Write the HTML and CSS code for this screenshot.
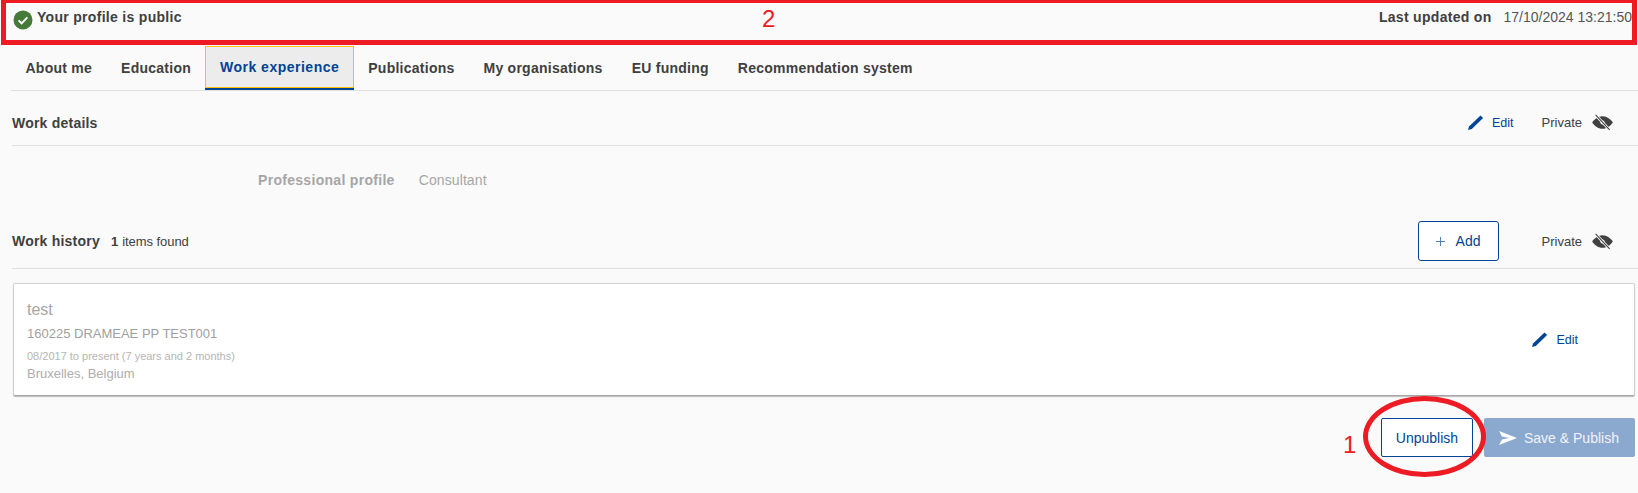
FILE: index.html
```html
<!DOCTYPE html>
<html lang="en">
<head>
    <meta charset="UTF-8">
    <title>Work experience</title>
    <link rel="stylesheet" href="styles.css">
</head>
<body>
    <!-- Status bar -->
    <div class="status-bar">
        <div class="status-left">
            <svg class="status-icon" viewBox="0 0 20 20" width="20" height="20">
                <circle cx="10" cy="10" r="9.5" fill="#467a39"/>
                <path d="M5.6 10.4l3 2.9 5.8-6" fill="none" stroke="#fff" stroke-width="1.9"/>
            </svg>
            <strong>Your profile is public</strong>
        </div>
        <div class="status-right">
            <strong>Last updated on</strong>
            <span>17/10/2024 13:21:50</span>
        </div>
    </div>

    <!-- Tabs -->
    <div class="tabs">
        <div class="tab">About me</div>
        <div class="tab">Education</div>
        <div class="tab tab-active">Work experience</div>
        <div class="tab">Publications</div>
        <div class="tab">My organisations</div>
        <div class="tab">EU funding</div>
        <div class="tab">Recommendation system</div>
    </div>

    <!-- Work details -->
    <div class="section-head details-head">
        <h2>Work details</h2>
        <div class="head-actions">
            <a class="edit-link">
                <svg viewBox="0 0 16 15" width="16" height="15"><path d="M0 15l1-3.500L12.500 .5l2.600 2.600L3.800 14z" fill="#004494"/></svg>
                Edit
            </a>
            <div class="private">
                Private
                <svg viewBox="0 0 20 16" width="21" height="17"><path d="M10 2C5.6 2 2.1 5 .2 8c1.9 3 5.4 6 9.8 6s7.9-3 9.8-6C17.900 5 14.400 2 10 2z" fill="#404040"/><circle cx="10" cy="8" r="2" fill="#fafafa"/><path d="M3.400 .8l13.400 14.200" stroke="#fafafa" stroke-width="2.600"/><path d="M3.400 .8l13.400 14.200" stroke="#404040" stroke-width="1"/></svg>
            </div>
        </div>
    </div>
    <div class="field">
        <strong>Professional profile</strong>
        <span>Consultant</span>
    </div>

    <!-- Work history -->
    <div class="section-head history-head">
        <div class="history-title"><h2>Work history</h2> <b>1</b> items found</div>
        <div class="head-actions">
            <button class="add-button">
                <svg viewBox="0 0 11 11" width="11" height="11"><path d="M5.5 0v11M0 5.5h11" stroke="#4d7cb5" stroke-width="1.2"/></svg>
                Add
            </button>
            <div class="private">
                Private
                <svg viewBox="0 0 20 16" width="21" height="17"><path d="M10 2C5.6 2 2.1 5 .2 8c1.9 3 5.4 6 9.8 6s7.9-3 9.8-6C17.900 5 14.400 2 10 2z" fill="#404040"/><circle cx="10" cy="8" r="2" fill="#fafafa"/><path d="M3.400 .8l13.400 14.200" stroke="#fafafa" stroke-width="2.600"/><path d="M3.400 .8l13.400 14.200" stroke="#404040" stroke-width="1"/></svg>
            </div>
        </div>
    </div>
    <div class="card">
        <div class="card-text">
            <div class="card-title">test</div>
            <div class="card-org">160225 DRAMEAE PP TEST001</div>
            <div class="card-date">08/2017 to present (7 years and 2 months)</div>
            <div class="card-place">Bruxelles, Belgium</div>
        </div>
        <a class="edit-link">
            <svg viewBox="0 0 16 15" width="16" height="15"><path d="M0 15l1-3.500L12.500 .5l2.600 2.600L3.800 14z" fill="#004494"/></svg>
            Edit
        </a>
    </div>

    <!-- Footer buttons -->
    <div class="footer-actions">
        <button class="unpublish-button">Unpublish</button>
        <button class="publish-button">
            <svg viewBox="0 0 18 14" width="18" height="14"><path d="M0 0l18 7-18 7 3-5.500 7-1.500-7-1.500z" fill="#fff"/></svg>
            Save &amp; Publish
        </button>
    </div>

    <!-- Red annotations drawn over the screenshot -->
    <div class="note-box"></div>
    <div class="note-number note-two">2</div>
    <div class="note-number note-one">1</div>
    <div class="note-ring"></div>
</body>
</html>
```

FILE: styles.css
```css
body {
    position: relative;
    margin: 0;
    height: 493px;
    overflow: hidden;
    background-color: #fafafa;
    color: #404040;
    font-family: "Liberation Sans", Arial, sans-serif;
    font-size: 13px;
}

h2 {
    margin: 0;
    font-size: 14px;
    font-weight: bold;
    letter-spacing: 0.22px;
}

.status-bar {
    display: flex;
    justify-content: space-between;
    height: 46px;
    padding: 9px 6px 0 13px;
    box-sizing: border-box;
    font-size: 14px;
}

.status-left {
    display: flex;
    align-items: flex-start;
    gap: 4px;
}

.status-bar strong {
    letter-spacing: 0.3px;
}

.status-icon {
    margin-top: 1px;
}

.status-right {
    display: flex;
    gap: 12px;
}

.status-right span {
    color: #555;
}

.tabs {
    display: flex;
    height: 45px;
    margin-left: 11px;
    border-bottom: 1px solid #e0e0e0;
    box-sizing: border-box;
    font-size: 14px;
    font-weight: bold;
    letter-spacing: 0.25px;
}

.tab {
    display: flex;
    align-items: center;
    height: 44px;
    box-sizing: border-box;
    padding: 0 14.5px;
    color: #404040;
}

.tab-active {
    background-color: #ececec;
    border-bottom: 2px solid #004494;
    box-shadow: inset 0 0 0 1px #ffc107;
    color: #004494;
    letter-spacing: 0.5px;
}

.section-head {
    display: flex;
    justify-content: space-between;
    align-items: center;
    margin-left: 12px;
    border-bottom: 1px solid #e0e0e0;
    box-sizing: border-box;
}

.details-head {
    height: 55px;
    padding: 9px 25px 0 0;
}

.history-head {
    padding: 21px 25px 7px 0;
}

.head-actions {
    display: flex;
    align-items: center;
    gap: 28px;
}

.edit-link {
    display: flex;
    align-items: center;
    gap: 8px;
    color: #004494;
    font-size: 12.5px;
}

.private {
    display: flex;
    align-items: center;
    gap: 10px;
}

.field {
    display: flex;
    gap: 24px;
    height: 40px;
    align-items: center;
    margin-top: 14px;
    padding-left: 258px;
    font-size: 14px;
    color: #a6a6a6;
}

.field strong {
    letter-spacing: 0.3px;
}

.field span {
    letter-spacing: 0.1px;
}

.history-title {
    display: flex;
    align-items: baseline;
    gap: 4px;
    letter-spacing: -0.05px;
}

.history-title b {
    margin-left: 7px;
}

.add-button {
    display: flex;
    align-items: center;
    gap: 11px;
    width: 81px;
    height: 40px;
    margin-right: 15px;
    padding: 0 17px;
    box-sizing: border-box;
    background-color: #fff;
    border: 1px solid #004494;
    border-radius: 3px;
    color: #004494;
    font-family: inherit;
    font-size: 14px;
}

.card {
    display: flex;
    justify-content: space-between;
    align-items: center;
    height: 113px;
    margin: 14px 3px 0 13px;
    padding: 0 56px 0 13px;
    box-sizing: border-box;
    background-color: #fff;
    border: 1px solid #d0d0d0;
    border-bottom-color: #a8a8a8;
    border-radius: 2px;
    box-shadow: 0 1px 1px #bbb;
}

.card-text {
    margin-top: 3px;
}

.card-title {
    font-size: 16px;
    color: #a6a6a6;
}

.card-org {
    margin-top: 7px;
    color: #a0a0a0;
}

.card-date {
    margin-top: 9px;
    font-size: 11px;
    color: #b5b5b5;
}

.card-place {
    margin-top: 4px;
    color: #adadad;
}

.footer-actions {
    display: flex;
    justify-content: flex-end;
    gap: 11px;
    margin: 22px 3px 0 0;
}

.unpublish-button,
.publish-button {
    height: 39px;
    box-sizing: border-box;
    border-radius: 2px;
    font-family: inherit;
    font-size: 14px;
}

.unpublish-button {
    width: 92px;
    background-color: #fff;
    border: 1px solid #004494;
    color: #004494;
}

.publish-button {
    display: flex;
    align-items: center;
    gap: 7px;
    width: 151px;
    padding: 0 15px;
    background-color: #8ba9cf;
    border: none;
    color: #f0f3f8;
}

.note-box {
    position: absolute;
    left: 1px;
    top: -2px;
    width: 1626px;
    height: 37px;
    border: 5px solid #ed1c24;
}

.note-number {
    position: absolute;
    color: #ed1c24;
    font-size: 24px;
    line-height: 28px;
}

.note-two {
    left: 762px;
    top: 5px;
}

.note-one {
    left: 1343px;
    top: 431px;
}

.note-ring {
    position: absolute;
    left: 1363px;
    top: 396px;
    width: 123px;
    height: 81px;
    box-sizing: border-box;
    border: 5px solid #ed1c24;
    border-radius: 50%;
}
```
